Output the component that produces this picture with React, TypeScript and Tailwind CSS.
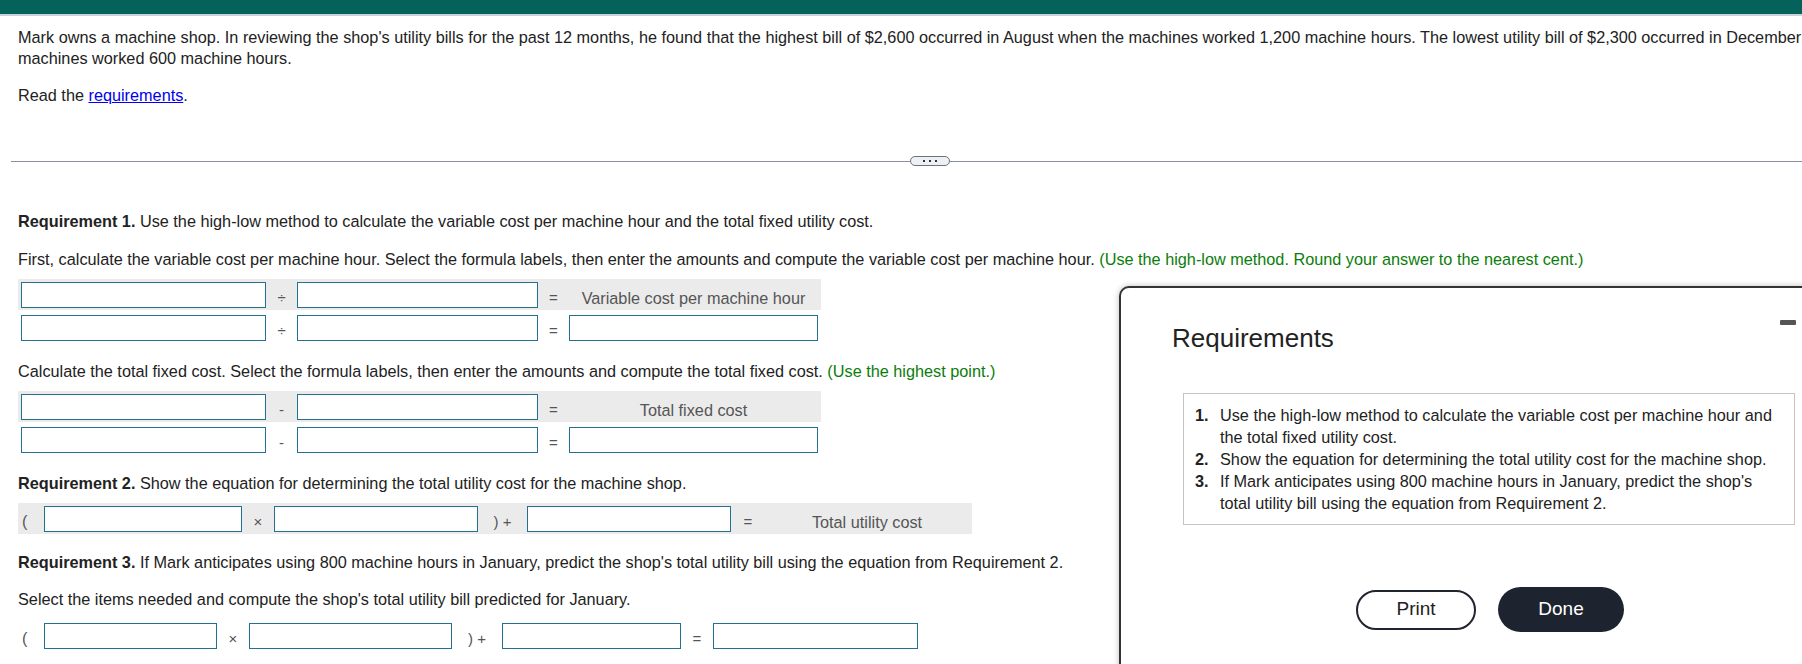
import React from "react";

function Box({ w }: { w: string }) {
  return <div className={`${w} h-[26px] shrink-0 border border-[#24708f] bg-white`} />;
}

function Op({ w, children, cls = "justify-center" }: { w: string; children: React.ReactNode; cls?: string }) {
  return (
    <div className={`${w} ${cls} flex h-[26px] shrink-0 items-center pt-[6px] text-[15px] text-[#555]`}>{children}</div>
  );
}

function Label({ w, children }: { w: string; children: React.ReactNode }) {
  return (
    <div className={`${w} flex h-[26px] shrink-0 items-center justify-center pt-[6px] text-[16.25px] text-[#555]`}>{children}</div>
  );
}

export default function App() {
  return (
    <div className="relative h-[664px] w-full overflow-hidden bg-white font-['Liberation_Sans',Arial,sans-serif] text-[16.25px] text-[#222]">
      <div className="h-[16px] border-b-2 border-[#c9d1d9] bg-[#05625a]" />
      <div className="w-[1940px]">
        <p className="mt-[11px] pl-[18px] pr-[18px] leading-[21px]">
          Mark owns a machine shop. In reviewing the shop's utility bills for the past 12 months, he found that the highest bill of $2,600 occurred in August when the machines worked 1,200 machine hours. The lowest utility bill of $2,300 occurred in December when the machines worked 600 machine hours.
        </p>
        <p className="mt-[16px] pl-[18px] leading-[21px]">
          Read the <span className="text-[#0000ee] underline">requirements</span>.
        </p>

        <div className="ml-[11px] mt-[50px] flex h-[10px] w-[1838px] items-center">
          <div className="h-px flex-1 bg-[#8a90a2]" />
          <div className="flex h-[10px] w-[40px] items-center justify-center gap-[4px] rounded-full border border-[#6b7183] bg-[#eef0f4]">
            <span className="h-[2px] w-[2px] bg-[#333]" />
            <span className="h-[2px] w-[2px] bg-[#333]" />
            <span className="h-[2px] w-[2px] bg-[#333]" />
          </div>
          <div className="h-px flex-1 bg-[#8a90a2]" />
        </div>

        <p className="mt-[45px] pl-[18px] leading-[21px]">
          <b>Requirement 1.</b> Use the high-low method to calculate the variable cost per machine hour and the total fixed utility cost.
        </p>
        <p className="mt-[17px] pl-[18px] leading-[21px]">
          First, calculate the variable cost per machine hour. Select the formula labels, then enter the amounts and compute the variable cost per machine hour.{" "}
          <span className="text-[#0b7d0b]">(Use the high-low method. Round your answer to the nearest cent.)</span>
        </p>

        <div className="ml-[18px] mt-[9px] flex w-[803px] bg-[#ebebeb] pb-[2px] pl-[3px] pt-[3px]">
          <Box w="w-[245px]" />
          <Op w="w-[31px]">÷</Op>
          <Box w="w-[241px]" />
          <Op w="w-[31px]">=</Op>
          <Label w="w-[249px]">Variable cost per machine hour</Label>
        </div>
        <div className="ml-[18px] mt-[2px] flex w-[803px] pb-[2px] pl-[3px] pt-[3px]">
          <Box w="w-[245px]" />
          <Op w="w-[31px]">÷</Op>
          <Box w="w-[241px]" />
          <Op w="w-[31px]">=</Op>
          <Box w="w-[249px]" />
        </div>

        <p className="mt-[18px] pl-[18px] leading-[21px]">
          Calculate the total fixed cost. Select the formula labels, then enter the amounts and compute the total fixed cost.{" "}
          <span className="text-[#0b7d0b]">(Use the highest point.)</span>
        </p>

        <div className="ml-[18px] mt-[9px] flex w-[803px] bg-[#ebebeb] pb-[2px] pl-[3px] pt-[3px]">
          <Box w="w-[245px]" />
          <Op w="w-[31px]">-</Op>
          <Box w="w-[241px]" />
          <Op w="w-[31px]">=</Op>
          <Label w="w-[249px]">Total fixed cost</Label>
        </div>
        <div className="ml-[18px] mt-[2px] flex w-[803px] pb-[2px] pl-[3px] pt-[3px]">
          <Box w="w-[245px]" />
          <Op w="w-[31px]">-</Op>
          <Box w="w-[241px]" />
          <Op w="w-[31px]">=</Op>
          <Box w="w-[249px]" />
        </div>

        <p className="mt-[18px] pl-[18px] leading-[21px]">
          <b>Requirement 2.</b> Show the equation for determining the total utility cost for the machine shop.
        </p>

        <div className="ml-[18px] mt-[9px] flex w-[954px] bg-[#ebebeb] pb-[2px] pt-[3px]">
          <Op w="w-[26px]" cls="justify-start pl-[4px] text-[16px]">(</Op>
          <Box w="w-[198px]" />
          <Op w="w-[32px]">×</Op>
          <Box w="w-[204px]" />
          <Op w="w-[49px]">) +</Op>
          <Box w="w-[204px]" />
          <Op w="w-[34px]">=</Op>
          <Label w="w-[204px]">Total utility cost</Label>
        </div>

        <p className="mt-[18px] pl-[18px] leading-[21px]">
          <b>Requirement 3.</b> If Mark anticipates using 800 machine hours in January, predict the shop's total utility bill using the equation from Requirement 2.
        </p>
        <p className="mt-[16px] pl-[18px] leading-[21px]">
          Select the items needed and compute the shop's total utility bill predicted for January.
        </p>

        <div className="ml-[18px] mt-[10px] flex pb-[2px] pt-[3px]">
          <Op w="w-[26px]" cls="justify-start pl-[4px] text-[16px]">(</Op>
          <Box w="w-[173px]" />
          <Op w="w-[32px]">×</Op>
          <Box w="w-[203px]" />
          <Op w="w-[50px]">) +</Op>
          <Box w="w-[179px]" />
          <Op w="w-[32px]">=</Op>
          <Box w="w-[205px]" />
        </div>
      </div>

      <div className="absolute left-[1119px] top-[286px] h-[420px] w-[742px] rounded-[10px] border-2 border-[#333] bg-white shadow-[0_0_6px_rgba(0,0,0,0.25)]">
        <div className="absolute left-[659px] top-[32px] h-[5px] w-[16px] rounded-[1px] bg-[#555]" />
        <h2 className="pl-[51px] pt-[35px] text-[26px] leading-[30px] text-[#222]">Requirements</h2>
        <div className="ml-[62px] mt-[40px] w-[612px] border border-[#c4c4c4] pb-[10px] pl-[11px] pr-[12px] pt-[10px] leading-[22px]">
          <div className="flex">
            <span className="w-[25px] shrink-0 font-bold">1.</span>
            <span>Use the high-low method to calculate the variable cost per machine hour and the total fixed utility cost.</span>
          </div>
          <div className="flex">
            <span className="w-[25px] shrink-0 font-bold">2.</span>
            <span>Show the equation for determining the total utility cost for the machine shop.</span>
          </div>
          <div className="flex">
            <span className="w-[25px] shrink-0 font-bold">3.</span>
            <span>If Mark anticipates using 800 machine hours in January, predict the shop's total utility bill using the equation from Requirement 2.</span>
          </div>
        </div>
        <div className="mt-[62px] flex items-center justify-center gap-[22px]">
          <button className="h-[40px] w-[120px] rounded-full border-2 border-[#1f2430] bg-white text-[19px] text-[#222]">Print</button>
          <button className="h-[45px] w-[126px] rounded-full bg-[#1e2330] text-[19px] text-white">Done</button>
        </div>
      </div>
    </div>
  );
}
